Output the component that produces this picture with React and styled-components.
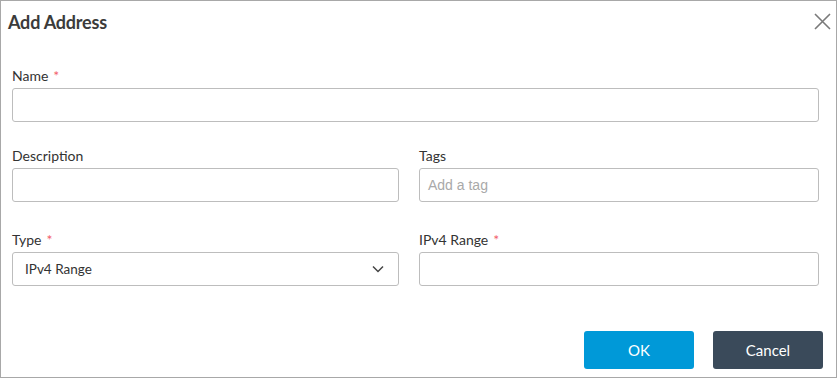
import React from 'react';
import styled, { createGlobalStyle } from 'styled-components';

const GlobalStyle = createGlobalStyle`
  html, body {
    margin: 0;
    padding: 0;
    background: #ffffff;
  }
  body {
    font-family: Lato, "Open Sans", Arial, sans-serif;
  }
  * {
    box-sizing: border-box;
  }
`;

const StyledDialog = styled.div`
  width: 837px;
  height: 378px;
  border: 1px solid #a8a8a8;
  background: #fff;
  display: flex;
  flex-direction: column;
`;

const StyledHeader = styled.div`
  height: 44px;
  display: flex;
  align-items: center;
  justify-content: space-between;
  padding: 0 5px 3px 7px;
`;

const StyledTitle = styled.h4`
  margin: 0;
  font-size: 18px;
  font-weight: 700;
  color: #3b3b3b;
  letter-spacing: -0.2px;
`;

const StyledClose = styled.button`
  border: 0;
  background: transparent;
  padding: 0;
  width: 18px;
  height: 18px;
  display: flex;
  align-items: center;
  justify-content: center;
  cursor: pointer;
`;

const StyledForm = styled.div`
  padding: 23px 17px 0 11px;
  display: grid;
  grid-template-columns: 387px 1fr;
  column-gap: 20px;
  row-gap: 26px;
`;

const StyledField = styled.div`
  display: flex;
  flex-direction: column;
  grid-column: ${({ $full }) => ($full ? '1 / -1' : 'auto')};
  margin-top: ${({ $offset }) => $offset || 0}px;
`;

const StyledLabel = styled.label`
  font-size: 14px;
  line-height: 16px;
  color: #333;
  margin-bottom: 4px;
`;

const StyledRequired = styled.span`
  color: #f2606a;
  margin-left: 5px;
`;

const StyledInput = styled.div`
  height: 34px;
  border: 1px solid #bdbdbd;
  border-radius: 3px;
  display: flex;
  align-items: center;
  justify-content: space-between;
  padding: 0 ${({ $select }) => ($select ? '14px 0 12px' : '8px')};
  font-size: 13.5px;
  color: #333;
`;

const StyledPlaceholder = styled.span`
  font-family: "Liberation Sans", Arial, sans-serif;
  font-size: 14px;
  color: #a9a9a9;
`;

const StyledFooter = styled.div`
  margin-top: auto;
  display: flex;
  justify-content: flex-end;
  gap: 19px;
  padding: 0 13px 8px 0;
`;

const StyledButton = styled.button`
  width: 110px;
  height: 38px;
  border: 0;
  border-radius: 3px;
  font-family: Lato, "Open Sans", Arial, sans-serif;
  font-size: 15px;
  color: #fff;
  background: ${({ $primary }) => ($primary ? '#0099d8' : '#3a4a5a')};
  cursor: pointer;
`;

const Field = ({ label, required, full, offset, children }) => (
  <StyledField $full={full} $offset={offset}>
    <StyledLabel>
      {label}
      {required && <StyledRequired>*</StyledRequired>}
    </StyledLabel>
    {children}
  </StyledField>
);

const App = () => {
  return (
    <>
      <GlobalStyle />
      <StyledDialog>
        <StyledHeader>
          <StyledTitle>Add Address</StyledTitle>
          <StyledClose aria-label="Close">
            <svg width="17" height="17" viewBox="0 0 17 17">
              <path d="M1 1 L16 16 M16 1 L1 16" stroke="#7a7a7a" strokeWidth="1.6" />
            </svg>
          </StyledClose>
        </StyledHeader>
        <StyledForm>
          <Field label="Name" required full>
            <StyledInput />
          </Field>
          <Field label="Description">
            <StyledInput />
          </Field>
          <Field label="Tags">
            <StyledInput>
              <StyledPlaceholder>Add a tag</StyledPlaceholder>
            </StyledInput>
          </Field>
          <Field label="Type" required offset={4}>
            <StyledInput $select>
              IPv4 Range
              <svg width="12" height="8" viewBox="0 0 12 8">
                <path d="M1 1.5 L6 6.5 L11 1.5" fill="none" stroke="#444" strokeWidth="1.5" />
              </svg>
            </StyledInput>
          </Field>
          <Field label="IPv4 Range" required offset={4}>
            <StyledInput />
          </Field>
        </StyledForm>
        <StyledFooter>
          <StyledButton $primary>OK</StyledButton>
          <StyledButton>Cancel</StyledButton>
        </StyledFooter>
      </StyledDialog>
    </>
  );
};

export default App;
